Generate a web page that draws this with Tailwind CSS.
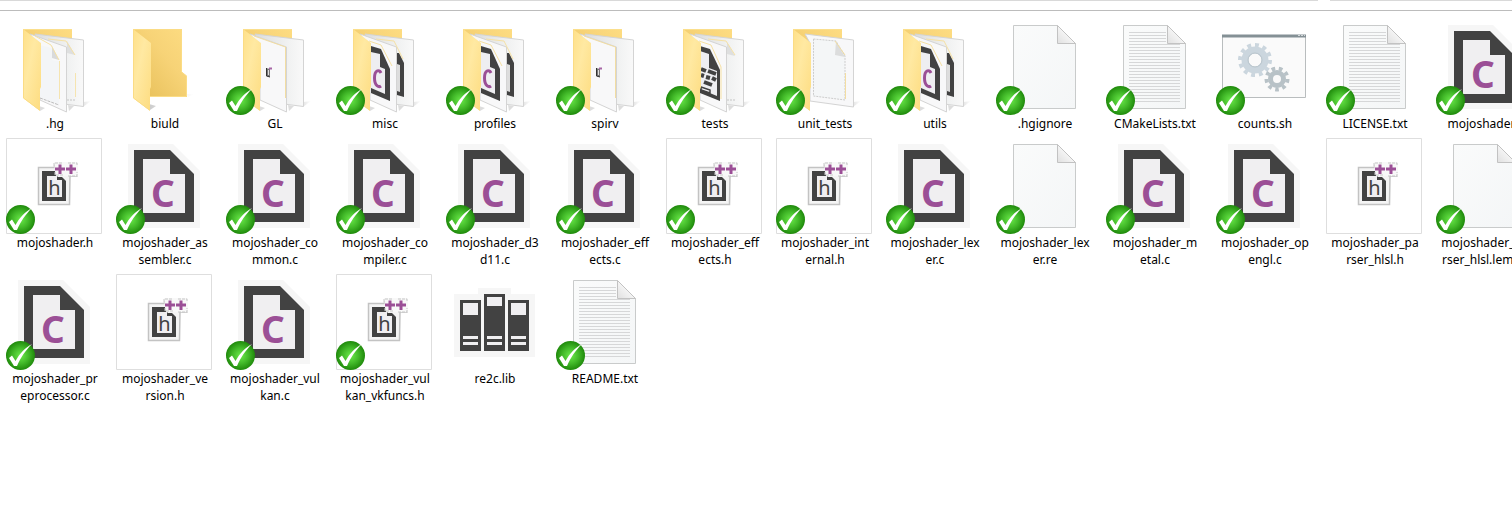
<!DOCTYPE html>
<html lang="en">
<head>
<meta charset="utf-8">
<title>mojoshader</title>
<script src="https://cdn.jsdelivr.net/npm/@tailwindcss/browser@4"></script>
</head>
<body class="min-h-screen overflow-hidden bg-white font-['Noto_Sans','Noto_Sans_CJK_SC',sans-serif] text-black">
<svg class="absolute size-0" aria-hidden="true">
  <defs>
    <linearGradient id="flap" x1="0" y1="0" x2="1" y2="1"><stop offset="0" stop-color="#ffe088"/><stop offset=".4" stop-color="#ffe9a2"/><stop offset="1" stop-color="#fddc80"/></linearGradient>
    <linearGradient id="back" x1="0" y1="1" x2="1" y2="0"><stop offset="0" stop-color="#e5bd55"/><stop offset=".6" stop-color="#f7d377"/><stop offset="1" stop-color="#fddc82"/></linearGradient>
    <linearGradient id="sheet" x1="0" y1="0" x2="1" y2="1"><stop offset="0" stop-color="#fafbfb"/><stop offset="1" stop-color="#f4f6f7"/></linearGradient>
    <linearGradient id="curl" x1="0" y1="1" x2="1" y2="0"><stop offset="0" stop-color="#e0e0e0"/><stop offset=".5" stop-color="#f4f4f4"/><stop offset="1" stop-color="#cfcfcf"/></linearGradient>
    <linearGradient id="rear" x1="0" x2="1"><stop offset="0" stop-color="#dcdddd"/><stop offset=".7" stop-color="#f1f2f2"/><stop offset="1" stop-color="#f9f9f9"/></linearGradient>
    <linearGradient id="shade" x1="0" x2="1"><stop offset="0" stop-color="#999" stop-opacity=".5"/><stop offset="1" stop-color="#999" stop-opacity="0"/></linearGradient>
    <radialGradient id="green" cx=".5" cy=".5" r=".5"><stop offset="0" stop-color="#6ae94a"/><stop offset=".55" stop-color="#42b929"/><stop offset="1" stop-color="#1f8a0b"/></radialGradient>

    <symbol id="folder-back" viewBox="0 0 96 96">
      <path d="M70 84l15-2-8 6z" fill="url(#shade)"/>
      <path d="M17 10H66V78H17z" fill="url(#back)"/><path d="M17 10.500H66" stroke="#fbdf8c"/>
    </symbol>
    <symbol id="folder-flap" viewBox="0 0 96 96">
      <path d="M17 10L35 24V68L34 70V92L17 79z" fill="url(#flap)"/>
      <path d="M17.500 11V79L33.500 91" fill="none" stroke="#fbdc85"/>
    </symbol>
    <symbol id="sheets" viewBox="0 0 96 96">
      <path d="M29 15L77.500 21V87.500L50 84z" fill="url(#rear)" stroke="#d4d4d4"/>
      <path d="M62 86l6 1-5 5zM33 87l6 2-5 3z" fill="#ddd"/>
      <path d="M24 15L60.500 28V93L34 81V30z" fill="#f8f8f9" stroke="#d4d4d4"/>
    </symbol>
    <symbol id="f-empty" viewBox="0 0 96 96">
      <path d="M71 75h7l-6 3zM33 85l7 2-6 4z" fill="url(#shade)"/>
      <path d="M17 10H66V53L71 57V78H17z" fill="url(#back)"/>
      <path d="M17 10.500H65.500V53L70.500 57V77.500H34" fill="none" stroke="#fbdc85"/>
      <use href="#folder-flap"/>
    </symbol>
    <symbol id="f-docs" viewBox="0 0 96 96">
      <use href="#folder-back"/><use href="#sheets"/>
      <path d="M61 22L69 36 61 34z" fill="#dedfdf"/><path d="M42 20L60 22 69 36" fill="none" stroke="#f6e1a4"/>
      <path d="M61 81h8" stroke="#c5c5c5" stroke-dasharray="2 1"/><path d="M69.500 54V78M53.500 42V80" stroke="#f5e4b0"/>
      <path d="M34 26L46 29V41L53 42V85L34 79z" fill="#f3f5f7"/><path d="M46 27L53 41 46 39z" fill="#d9dadb"/>
      <path d="M29 17L45 26 53 41" fill="none" stroke="#f6e1a4"/><path d="M34 79L53 86" stroke="#bbb" stroke-dasharray="3 1"/>
      <use href="#folder-flap"/>
    </symbol>
    <symbol id="f-h" viewBox="0 0 96 96">
      <use href="#folder-back"/><use href="#sheets"/>
      <path d="M28 17L59.500 28V79" fill="none" stroke="#f2dda2"/>
      <path d="M40 49L44 50V58L40 57z" fill="#777"/><path d="M40.500 49V57L44 58" fill="none" stroke="#333"/><path d="M42.500 51v5" stroke="#ddd"/><path d="M43 49.500h3" stroke="#a765a5" stroke-width="2"/>
      <use href="#folder-flap"/>
    </symbol>
    <symbol id="f-c" viewBox="0 0 96 96">
      <use href="#folder-back"/><use href="#sheets"/>
      <path d="M61 34L63 34 68 44V78L61 76z" fill="#424242"/><path d="M61 45L64 46V73L61 72z" fill="#ddd"/>
      <path d="M40 20L58 22 67 40M33 22L45 26 56 47" fill="none" stroke="#f6e1a4"/>
      <path d="M35 27L45 30 54 50V82L35 74z" fill="#424242"/>
      <path d="M35 33L44 35V48L49 50V75L35 69z" fill="#eeeef1"/>
      <path d="M45 54C43 50 38.500 51 38.500 59S43 68.500 45 67" fill="none" stroke="#9b4f96" stroke-width="3"/>
      <use href="#folder-flap"/>
    </symbol>
    <symbol id="f-text" viewBox="0 0 96 96">
      <use href="#folder-back"/><use href="#sheets"/>
      <path d="M61 23L69 37 61 35z" fill="#dedfdf"/><path d="M42 20L60 22 69 36M33 22L45 26 55 48V80" fill="none" stroke="#f6e1a4"/>
      <path d="M61 81h8" stroke="#c5c5c5" stroke-dasharray="2 1"/>
      <path d="M34 27L44 30 54 51V82L34 74z" fill="#424242"/>
      <path d="M34 32L43 35V49L51 52V77L34 70z" fill="#eeeef1"/>
      <path d="M35 50l5 2M42 52l8 3M35 56l3 1M40 58l4 1M46 59l4 2M38 63l8 3" stroke="#424242" stroke-width="4"/>
      <path d="M35 68l9 3v3l-9-3z" fill="none" stroke="#424242" stroke-width="1.500"/>
      <use href="#folder-flap"/>
    </symbol>
    <symbol id="f-blank" viewBox="0 0 96 96">
      <use href="#folder-back"/>
      <path d="M29 15L77.500 21V88L34 82V24z" fill="#f8f8f9" stroke="#d4d4d4"/>
      <path d="M37.500 20L60 22 69 37V81L37.500 77z" fill="#f4f6f7" stroke="#ccc" stroke-dasharray="2 1"/>
      <path d="M60 22L69 38 59 36z" fill="#dcdddd"/><path d="M59 22L69 36M69.500 54V80" stroke="#f2dda2"/>
      <use href="#folder-flap"/>
    </symbol>

    <symbol id="doc" viewBox="0 0 96 96">
      <path d="M17.500 6.500H61.500L79.500 24.500V89.500H17.500z" fill="url(#sheet)" stroke="#c9cbcb"/>
      <path d="M61.500 6.500V24.500H79.500z" fill="url(#curl)" stroke="#c2c2c2"/>
    </symbol>
    <symbol id="txt" viewBox="0 0 96 96">
      <use href="#doc"/>
      <path d="M23 13.500H60M23 16.500H60M23 19.500H60M23 22.500H60M23 25.500H74M23 28.500H74M23 31.500H74M23 34.500H74M23 37.500H74M23 40.500H74M23 43.500H74M23 46.500H74M23 49.500H74M23 52.500H74M23 55.500H74M23 58.500H74M23 61.500H74M23 64.500H74M23 67.500H74M23 70.500H74M23 73.500H74M23 76.500H74M23 79.500H74M23 82.500H74" stroke="#d6d7d8"/>
    </symbol>
    <symbol id="c" viewBox="0 0 96 96">
      <path d="M12 6H57L84 33V90H12z" fill="#f6f6f6"/>
      <path d="M18 12H54L78 36V84H18z" fill="#424242"/>
      <path d="M27 21H54V36H69V75H27z" fill="#f0eff1"/>
      <text x="47" y="69" text-anchor="middle" font-family="Noto Sans" font-weight="700" font-size="37" fill="#9b4f96">C</text>
    </symbol>
    <symbol id="h" viewBox="0 0 96 96">
      <path d="M.5.5H95.500V95.500H.5z" fill="#fff" stroke="#dedede"/>
      <path d="M32.500 29.500H48L50 25H71V38H64L63.500 66.500H32.500z" fill="#f4f4f4" stroke="#c3c3c3" stroke-width="1.500"/>
      <path d="M36 33H49V36L52 39H56L60 43V63H36z" fill="#424242"/>
      <path d="M41 38H51V42H56V59H41z" fill="#f0eff1"/>
      <text x="48.500" y="57" text-anchor="middle" font-family="Noto Sans" font-size="20" fill="#424242">h</text>
      <path d="M48 24H72V38H50z" fill="#f8f8f8"/>
      <path d="M48 28V25H57M62 25H71V28M49 34V37H57M62 38H71V34" fill="none" stroke="#c6c6c6" stroke-dasharray="3 1"/>
      <path d="M49 31H59M54 26.500V36M60 31H70M65 26.500V36" stroke="#9b4f96" stroke-width="3"/>
    </symbol>
    <symbol id="lib" viewBox="0 0 96 96">
      <path d="M8 20H32V14H65V20H89V83H8z" fill="#f6f6f6"/>
      <path d="M14 26H35V77H14zM38 20H59V77H38zM62 26H83V77H62z" fill="#424242"/>
      <path d="M17 29H32V41H17zM41 23H56V32H41zM65 29H80V41H65zM17 62H32V65H17zM41 62H56V65H41zM65 62H80V65H65zM17 68H32V71H17zM41 68H56V71H41zM65 68H80V71H65z" fill="#f0eff1"/>
    </symbol>
    <symbol id="sh" viewBox="0 0 96 96">
      <path d="M6.500 16.500H89.500V78.500H6.500z" fill="#fafafa" stroke="#b9bdbe"/>
      <path d="M6 15.500H90V18.500H6z" fill="#849095"/><path d="M82 16.500h2M85 16.500h2M88 16.500h1" stroke="#d6dadc"/>
      <g fill="none" stroke="#cbd6de">
        <circle cx="39" cy="41" r="10" stroke-width="7"/><circle cx="39" cy="41" r="15" stroke-width="4" pathLength="24" stroke-dasharray="1"/>
        <circle cx="39" cy="41" r="7" stroke="#b9c5cc"/>
      </g>
      <g fill="none" stroke="#b8c2c7">
        <circle cx="61" cy="60" r="6.500" stroke-width="5"/><circle cx="61" cy="60" r="10.500" stroke-width="4" pathLength="18" stroke-dasharray="1"/>
      </g>
    </symbol>
    <symbol id="check" viewBox="0 0 96 96">
      <circle cx="14.500" cy="81.500" r="14.500" fill="url(#green)"/>
      <path d="M3 84L6 81.500 9.500 87C14 79 19 74 26 70 19 77 15 83 11 92H8z" fill="#fff"/>
    </symbol>
  </defs>
</svg>

<header class="flex h-[11px] gap-3 border-b border-[#bcbcbc]" aria-hidden="true">
  <div class="h-px w-[1318px] shrink-0 bg-[#d9d9d9]"></div>
  <div class="h-px grow bg-[#d9d9d9]"></div>
</header>
<main>
  <ul id="files" class="grid grid-cols-[repeat(14,96px)] gap-x-[14px] gap-y-1.5 pt-2 pl-1.5"></ul>
</main>

<script>
  // [label, icon, checked in]; "|" marks where the label breaks
  const files = [
    ['.hg','f-docs',0],['biuld','f-empty',0],['GL','f-h',1],['misc','f-c',1],['profiles','f-c',1],['spirv','f-h',1],['tests','f-text',1],['unit_tests','f-blank',1],['utils','f-c',1],['.hgignore','doc',1],['CMakeLists.txt','txt',1],['counts.sh','sh',1],['LICENSE.txt','txt',1],['mojoshader.c','c',1],
    ['mojoshader.h','h',1],['mojoshader_as|sembler.c','c',1],['mojoshader_co|mmon.c','c',1],['mojoshader_co|mpiler.c','c',1],['mojoshader_d3|d11.c','c',1],['mojoshader_eff|ects.c','c',1],['mojoshader_eff|ects.h','h',1],['mojoshader_int|ernal.h','h',1],['mojoshader_lex|er.c','c',1],['mojoshader_lex|er.re','doc',1],['mojoshader_m|etal.c','c',1],['mojoshader_op|engl.c','c',1],['mojoshader_pa|rser_hlsl.h','h',0],['mojoshader_pa|rser_hlsl.lemon','doc',1],
    ['mojoshader_pr|eprocessor.c','c',1],['mojoshader_ve|rsion.h','h',0],['mojoshader_vul|kan.c','c',1],['mojoshader_vul|kan_vkfuncs.h','h',1],['re2c.lib','lib',0],['README.txt','txt',1]
  ];
  document.getElementById('files').innerHTML = files.map(([name, icon, ok]) => `
    <li class="flex flex-col items-center">
      <svg class="size-24 shrink-0" viewBox="0 0 96 96" aria-hidden="true"><use href="#${icon}"/>${ok ? '<use href="#check"/>' : ''}</svg>
      <span class="pl-0.5 text-center text-[12px] leading-[17px] whitespace-nowrap">${name.replace('|', '<br>')}</span>
    </li>`).join('');
</script>
</body>
</html>
